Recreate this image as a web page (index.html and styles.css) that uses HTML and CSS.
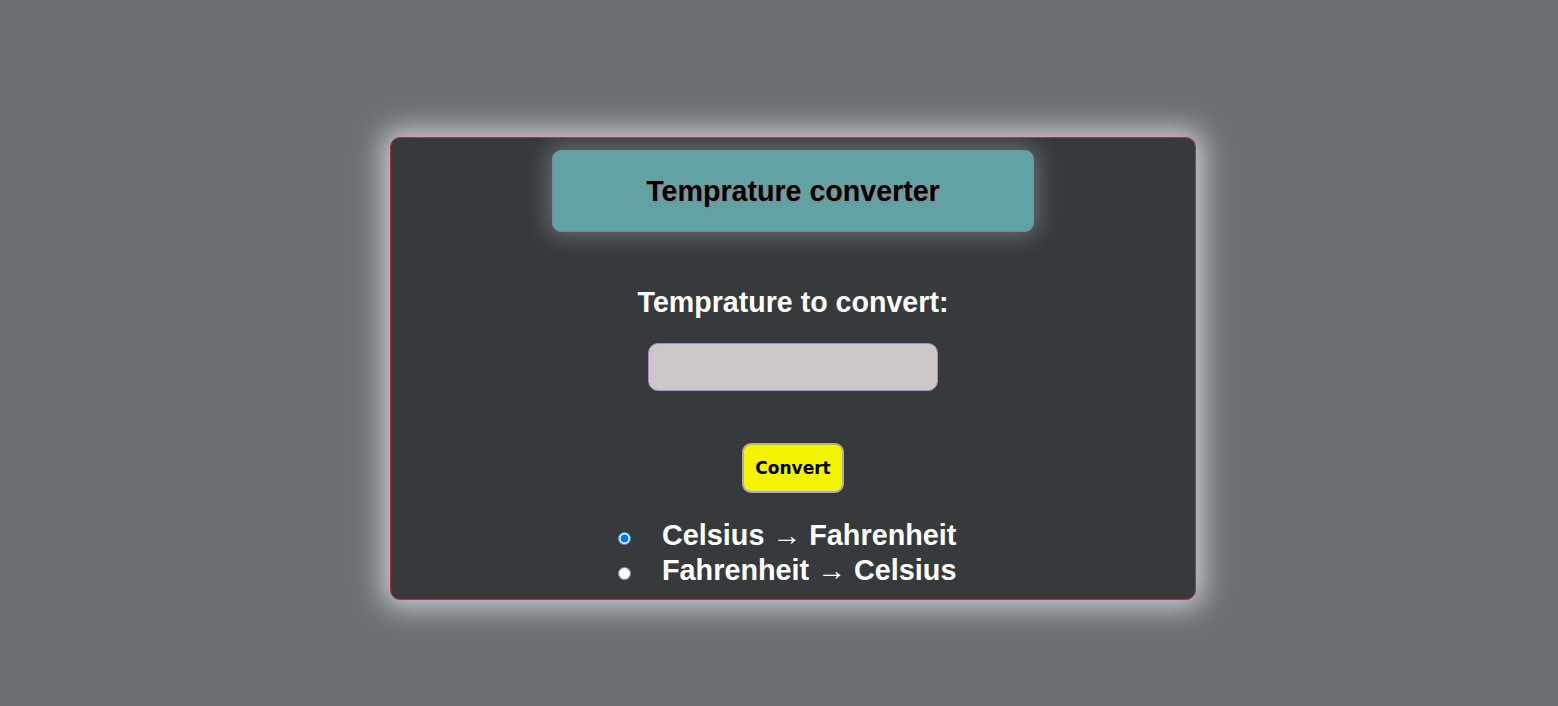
FILE: index.html
```html
<!DOCTYPE html>
<html>
<head>
<meta charset="utf-8">
<title>Temprature converter</title>
<link rel="stylesheet" href="styles.css">
</head>
<body>
<div class="card">
  <div class="header"><h1 class="title">Temprature converter</h1></div>
  <label class="prompt" for="temp">Temprature to convert:</label>
  <input class="field" id="temp" type="text">
  <button class="convert">Convert</button>
  <div class="options">
    <label class="option"><input type="radio" name="dir" checked><span class="option-text">Celsius → Fahrenheit</span></label>
    <label class="option"><input type="radio" name="dir"><span class="option-text">Fahrenheit → Celsius</span></label>
  </div>
</div>
</body>
</html>
```
FILE: styles.css
```css
html, body {
  margin: 0;
  padding: 0;
}
body {
  background: #6a7073;
  font-family: "Liberation Sans", Arial, sans-serif;
  height: 706px;
  overflow: hidden;
}
.card {
  box-sizing: border-box;
  margin: 137px 0 0 390px;
  width: 806px;
  height: 463px;
  border: 1px solid #b0333b;
  border-radius: 10px;
  background: #363a3d;
  box-shadow: 0 0 28px 8px rgba(225, 226, 235, 0.8);
  display: flex;
  flex-direction: column;
  align-items: center;
}
.header {
  box-sizing: border-box;
  margin-top: 12px;
  width: 482px;
  height: 82px;
  background: #62a2a4;
  border: 1px solid #7b8f91;
  border-radius: 9px;
  box-shadow: 0 0 22px 4px rgba(170, 172, 178, 0.45);
  display: flex;
  align-items: center;
  justify-content: center;
}
.title {
  margin: 0;
  font-size: 28.6px;
  font-weight: bold;
  color: #000;
  text-shadow: 2px 2px 0 #8a8a8a;
}
.prompt {
  margin-top: 54px;
  line-height: 32px;
  font-size: 28.6px;
  font-weight: bold;
  color: #fff;
}
.field {
  box-sizing: border-box;
  margin-top: 25px;
  width: 290px;
  height: 48px;
  background: #cdc7c7;
  border: 1px solid #a68ccc;
  border-radius: 10px;
  outline: none;
}
.convert {
  box-sizing: border-box;
  margin-top: 52px;
  width: 102px;
  height: 50px;
  background: #f4f400;
  border: 2px solid #adadad;
  border-radius: 9px;
  font-family: "DejaVu Sans", Verdana, sans-serif;
  font-weight: bold;
  font-size: 17px;
  color: #000;
  padding: 0;
}
.options {
  margin-top: 26px;
  width: 360px;
  display: flex;
  flex-direction: column;
}
.option {
  display: flex;
  align-items: center;
  height: 35px;
  line-height: 35px;
  color: #fff;
  font-size: 28.8px;
  font-weight: bold;
}
.option input {
  margin: 3px 3px 0 5px;
}
.option-text {
  margin-left: 28px;
  margin-top: -3px;
}
```
